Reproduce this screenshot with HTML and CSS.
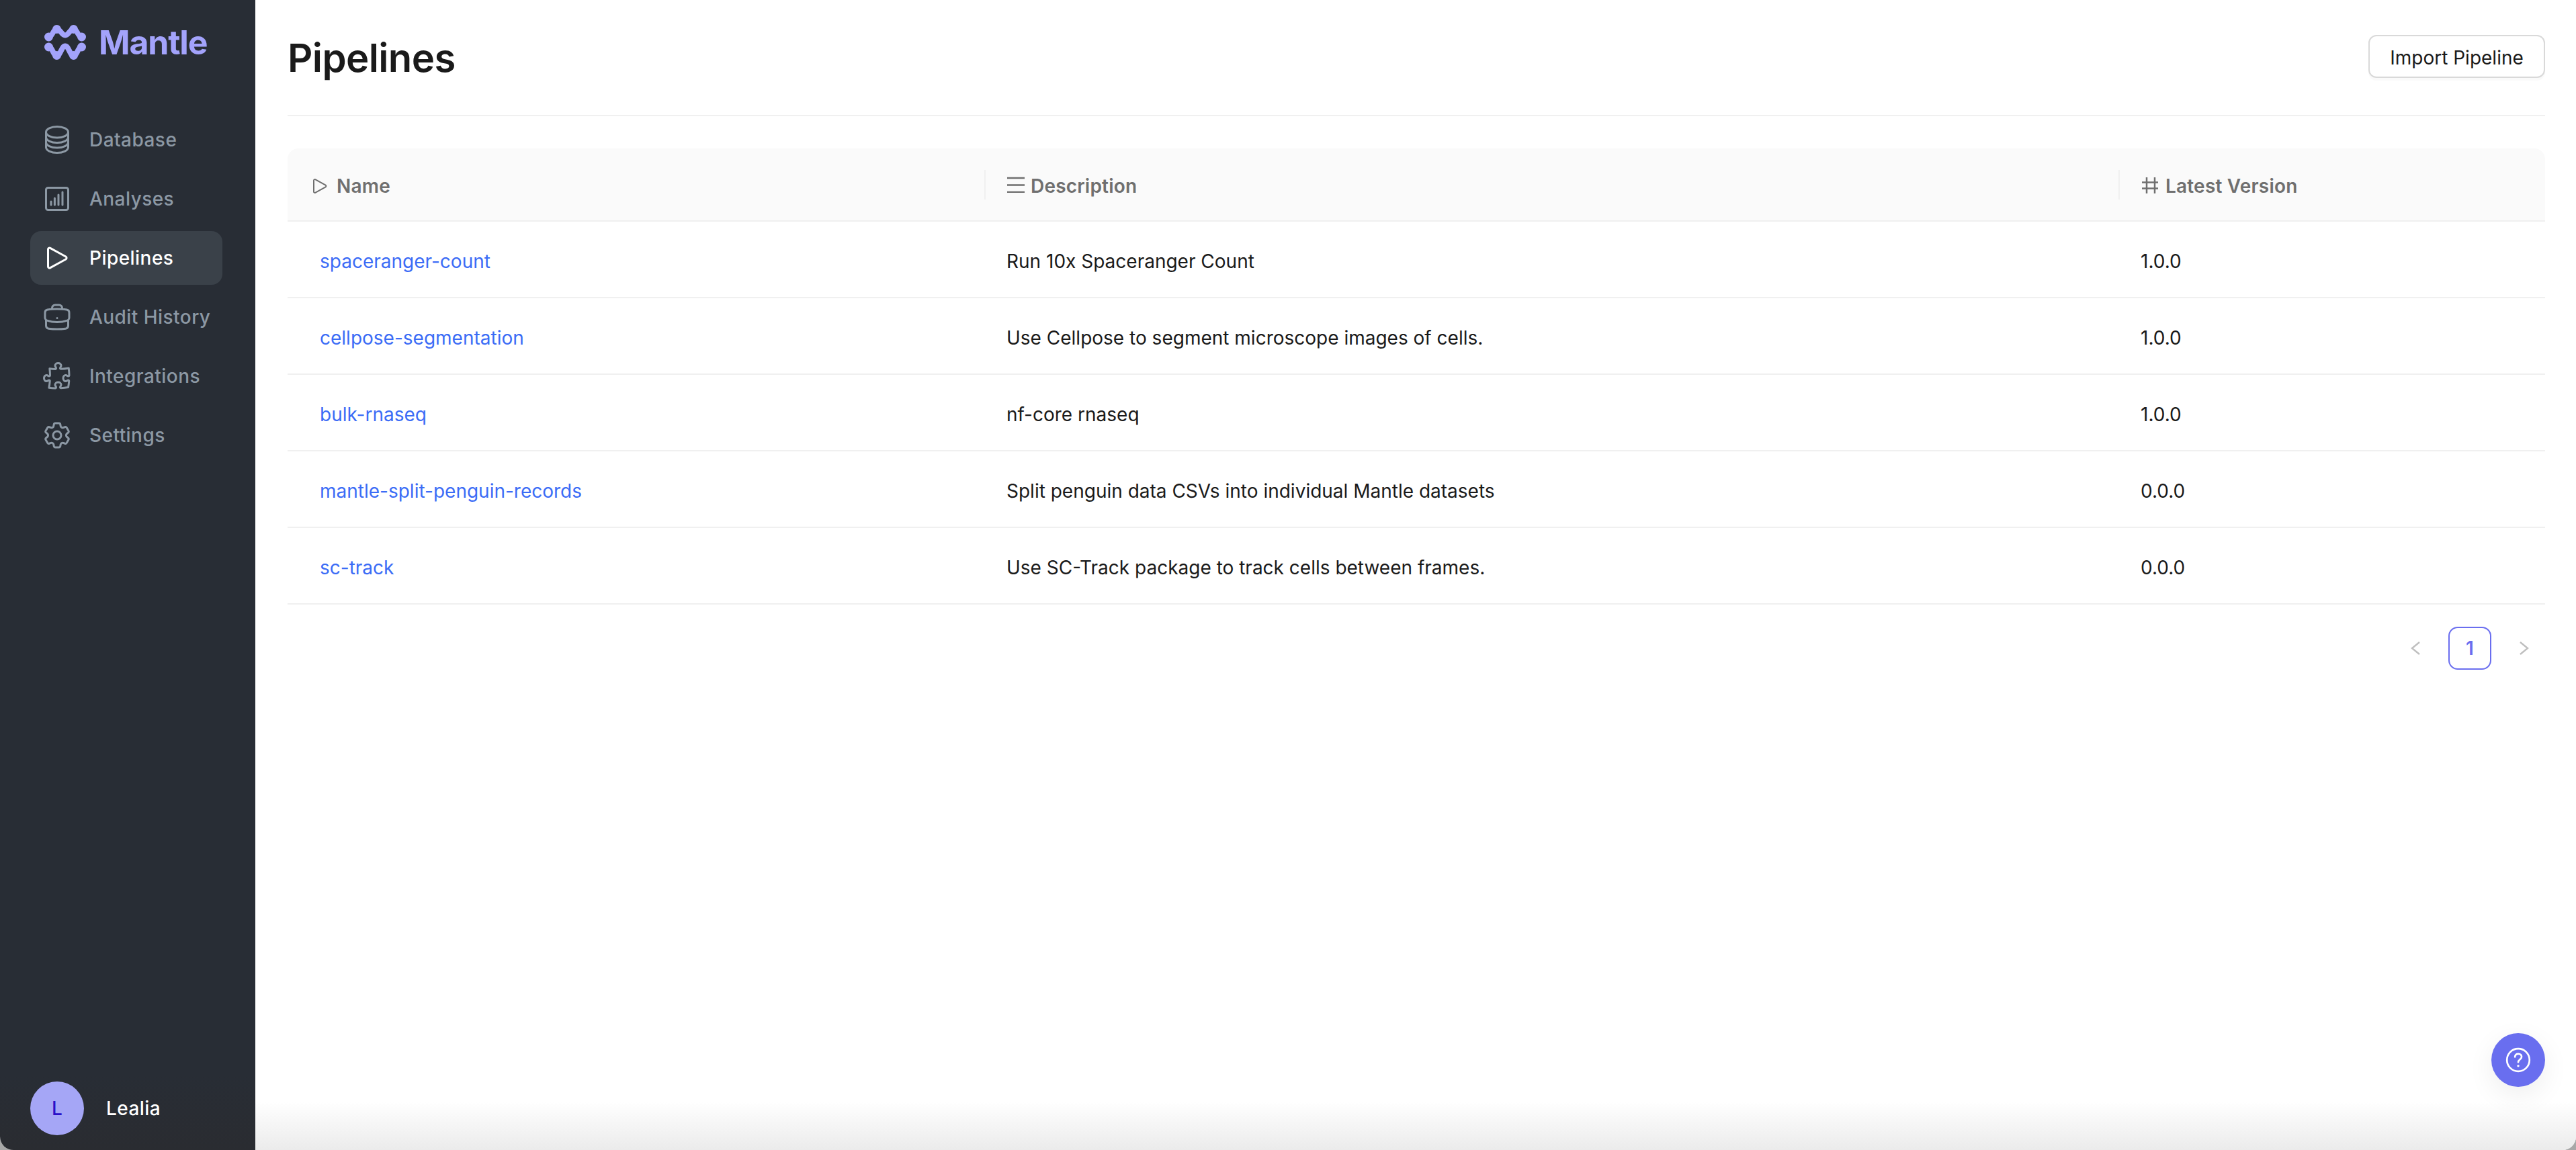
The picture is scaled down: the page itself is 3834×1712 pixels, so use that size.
FILE: index.html
```html
<!DOCTYPE html>
<html lang="en">
<head>
<meta charset="utf-8">
<title>Pipelines - Mantle</title>
<link rel="stylesheet" href="styles.css">
</head>
<body>
<div class="app">
  <aside class="sidebar">
    <div class="brand">
      <svg class="brand-mark" viewBox="0 0 62 52" width="62" height="52" fill="none">
        <g class="wave">
          <path d="M6.5 18C12.5 18 12.5 6.5 18.5 6.5S25.5 15.5 31 15.5 37.5 6.5 43.5 6.5 49.5 18 55.5 18"/>
          <path d="M6.5 33C12.5 33 12.5 45.5 18.5 45.5S25.5 31.5 31 31.5 37.5 45.5 43.5 45.5 49.5 33 55.5 33"/>
        </g>
        <g class="wave-dots">
          <circle cx="6.5" cy="18" r="6.5"/><circle cx="18.5" cy="6.5" r="6.5"/><circle cx="43.5" cy="6.5" r="6.5"/><circle cx="55.5" cy="18" r="6.5"/>
          <circle cx="6.5" cy="33" r="6.5"/><circle cx="18.5" cy="45.5" r="6.5"/><circle cx="43.5" cy="45.5" r="6.5"/><circle cx="55.5" cy="33" r="6.5"/>
        </g>
      </svg>
      <span class="brand-name">Mantle</span>
    </div>
    <nav class="nav">
      <a class="nav-item">
        <svg class="nav-icon" viewBox="0 0 24 24"><path d="M20.25 6.375c0 2.278-3.694 4.125-8.25 4.125S3.75 8.653 3.75 6.375m16.5 0c0-2.278-3.694-4.125-8.25-4.125S3.75 4.097 3.75 6.375m16.5 0v11.25c0 2.278-3.694 4.125-8.25 4.125s-8.25-1.847-8.25-4.125V6.375m16.5 0v3.75m-16.5-3.75v3.75m16.5 0v3.75C20.25 16.153 16.556 18 12 18s-8.25-1.847-8.25-4.125v-3.75m16.5 0c0 2.278-3.694 4.125-8.25 4.125s-8.25-1.847-8.25-4.125"/></svg>
        <span>Database</span>
      </a>
      <a class="nav-item">
        <svg class="nav-icon" viewBox="0 0 24 24"><rect x="3.75" y="3.75" width="16.5" height="16.5" rx="1.5"/><path d="M7.5 16.5V14M10.2 16.5V11.5M13 16.5V9M16 16.5V7"/></svg>
        <span>Analyses</span>
      </a>
      <a class="nav-item active">
        <svg class="nav-icon" viewBox="0 0 24 24"><path stroke-linejoin="round" d="M5.25 5.653c0-.856.917-1.398 1.667-.986l11.54 6.348a1.125 1.125 0 010 1.971l-11.54 6.347a1.125 1.125 0 01-1.667-.985V5.653z"/></svg>
        <span>Pipelines</span>
      </a>
      <a class="nav-item">
        <svg class="nav-icon" viewBox="0 0 24 24"><path d="M20.25 14.15v4.25c0 1.094-.787 2.036-1.872 2.18-2.087.277-4.216.42-6.378.42s-4.291-.143-6.378-.42c-1.085-.144-1.872-1.086-1.872-2.18v-4.25m16.5 0a2.18 2.18 0 00.75-1.661V8.706c0-1.081-.768-2.015-1.837-2.175a48.114 48.114 0 00-3.413-.387m4.5 8.006c-.194.165-.42.295-.673.38A23.978 23.978 0 0112 15.75c-2.648 0-5.195-.429-7.577-1.22a2.016 2.016 0 01-.673-.38m0 0A2.18 2.18 0 013 12.489V8.706c0-1.081.768-2.015 1.837-2.175a48.111 48.111 0 013.413-.387m7.5 0V5.25A2.25 2.25 0 0013.5 3h-3a2.25 2.25 0 00-2.25 2.25v.894m7.5 0a48.667 48.667 0 00-7.5 0M12 12.75h.008v.008H12v-.008z"/></svg>
        <span>Audit History</span>
      </a>
      <a class="nav-item">
        <svg class="nav-icon" viewBox="0 0 24 24"><path d="M14.25 6.087c0-.355.186-.676.401-.959.221-.29.349-.634.349-1.003 0-1.036-1.007-1.875-2.25-1.875s-2.25.84-2.25 1.875c0 .369.128.713.349 1.003.215.283.401.604.401.959v0a.64.64 0 01-.657.643 48.39 48.39 0 01-4.163-.3c.186 1.613.293 3.25.315 4.907a.656.656 0 01-.658.663v0c-.355 0-.676-.186-.959-.401a1.647 1.647 0 00-1.003-.349c-1.036 0-1.875 1.007-1.875 2.25s.84 2.25 1.875 2.25c.369 0 .713-.128 1.003-.349.283-.215.604-.401.959-.401v0c.31 0 .555.26.532.57a48.039 48.039 0 01-.642 5.056c1.518.19 3.058.309 4.616.354a.64.64 0 00.657-.643v0c0-.355-.186-.676-.401-.959a1.647 1.647 0 01-.349-1.003c0-1.035 1.008-1.875 2.25-1.875 1.243 0 2.25.84 2.25 1.875 0 .369-.128.713-.349 1.003-.215.283-.4.604-.4.959v0c0 .333.277.599.61.58a48.1 48.1 0 005.427-.63 48.05 48.05 0 00.582-4.717.532.532 0 00-.533-.57v0c-.355 0-.676.186-.959.401-.29.221-.634.349-1.003.349-1.035 0-1.875-1.007-1.875-2.25s.84-2.25 1.875-2.25c.37 0 .713.128 1.003.349.283.215.604.401.96.401v0a.656.656 0 00.658-.663 48.422 48.422 0 00-.37-5.36c-1.886.342-3.81.574-5.766.689a.578.578 0 01-.61-.58v0z"/></svg>
        <span>Integrations</span>
      </a>
      <a class="nav-item">
        <svg class="nav-icon" viewBox="0 0 24 24"><path d="M9.594 3.94c.09-.542.56-.94 1.11-.94h2.593c.55 0 1.02.398 1.11.94l.213 1.281c.063.374.313.686.645.87.074.04.147.083.22.127.324.196.72.257 1.075.124l1.217-.456a1.125 1.125 0 011.37.49l1.296 2.247a1.125 1.125 0 01-.26 1.431l-1.003.827c-.293.24-.438.613-.431.992a6.759 6.759 0 010 .255c-.007.378.138.75.43.99l1.005.828c.424.35.534.954.26 1.43l-1.298 2.247a1.125 1.125 0 01-1.369.491l-1.217-.456c-.355-.133-.75-.072-1.076.124a6.57 6.57 0 01-.22.128c-.331.183-.581.495-.644.869l-.213 1.28c-.09.543-.56.941-1.11.941h-2.594c-.55 0-1.02-.398-1.11-.94l-.213-1.281c-.062-.374-.312-.686-.644-.87a6.52 6.52 0 01-.22-.127c-.325-.196-.72-.257-1.076-.124l-1.217.456a1.125 1.125 0 01-1.369-.49l-1.297-2.247a1.125 1.125 0 01.26-1.431l1.004-.827c.292-.24.437-.613.43-.992a6.932 6.932 0 010-.255c.007-.378-.138-.75-.43-.99l-1.004-.828a1.125 1.125 0 01-.26-1.43l1.297-2.247a1.125 1.125 0 011.37-.491l1.216.456c.356.133.751.072 1.076-.124.072-.044.146-.087.22-.128.332-.183.582-.495.644-.869l.214-1.281z"/><path d="M15 12a3 3 0 11-6 0 3 3 0 016 0z"/></svg>
        <span>Settings</span>
      </a>
    </nav>
    <div class="user">
      <div class="avatar">L</div>
      <span class="user-name">Lealia</span>
    </div>
  </aside>

  <main class="main">
    <header class="page-header">
      <h1 class="page-title">Pipelines</h1>
      <button class="btn">Import Pipeline</button>
    </header>

    <table class="table">
      <thead>
        <tr>
          <th class="col-name"><span class="th-inner th-inner-name">
            <svg class="th-icon th-play" viewBox="0 0 24 24"><path stroke-linejoin="round" d="M5.25 5.653c0-.856.917-1.398 1.667-.986l11.54 6.348a1.125 1.125 0 010 1.971l-11.54 6.347a1.125 1.125 0 01-1.667-.985V5.653z"/></svg>Name</span></th>
          <th class="col-desc"><span class="th-inner th-divided th-inner-desc">
            <svg class="th-icon th-bars" viewBox="0 0 26 24"><path d="M0 2h26M0 12.5h26M0 23h26"/></svg>Description</span></th>
          <th class="col-ver"><span class="th-inner th-divided th-inner-ver">
            <svg class="th-icon th-hash" viewBox="0 0 24 24"><path d="M7 0v24M19 0v24M0 7.5h24M0 16.5h24"/></svg>Latest Version</span></th>
        </tr>
      </thead>
      <tbody>
        <tr><td class="cell-name"><a class="link">spaceranger-count</a></td><td>Run 10x Spaceranger Count</td><td>1.0.0</td></tr>
        <tr><td class="cell-name"><a class="link">cellpose-segmentation</a></td><td>Use Cellpose to segment microscope images of cells.</td><td>1.0.0</td></tr>
        <tr><td class="cell-name"><a class="link">bulk-rnaseq</a></td><td>nf-core rnaseq</td><td>1.0.0</td></tr>
        <tr><td class="cell-name"><a class="link">mantle-split-penguin-records</a></td><td>Split penguin data CSVs into individual Mantle datasets</td><td>0.0.0</td></tr>
        <tr><td class="cell-name"><a class="link">sc-track</a></td><td>Use SC-Track package to track cells between frames.</td><td>0.0.0</td></tr>
      </tbody>
    </table>

    <div class="pagination">
      <svg class="chev" viewBox="0 0 14 20"><path d="M13 1L2 10l11 9"/></svg>
      <span class="page-num">1</span>
      <svg class="chev" viewBox="0 0 14 20"><path d="M1 1l11 9-11 9"/></svg>
    </div>

    <button class="help" aria-label="Help">
      <svg class="help-icon" viewBox="0 0 24 24"><circle cx="12" cy="12" r="10.6"/><path d="M8.9 9.1c.2-1.8 1.5-2.9 3.2-2.9 1.8 0 3.1 1.2 3.1 2.8 0 2.5-3.2 2.6-3.2 5"/><circle class="help-dot" cx="12" cy="17.6" r="1.1"/></svg>
    </button>
  </main>
</div>
</body>
</html>
```

FILE: styles.css
```css
* { box-sizing: border-box; }
html, body { margin: 0; height: 100%; }
body {
  background: #a8a8a8;
  font-family: Inter, "Liberation Sans", sans-serif;
  font-size: 28px;
  color: #1a1a1a;
  overflow: hidden;
}
.app {
  display: flex;
  height: 1712px;
  border-radius: 0 0 20px 20px;
  overflow: hidden;
  background: #fff;
}

/* Sidebar */
.sidebar {
  flex: 0 0 380px;
  display: flex;
  flex-direction: column;
  background: linear-gradient(#282d35 1600px, #2a2c31 100%);
}
.brand {
  display: flex;
  align-items: center;
  gap: 19px;
  height: 52px;
  margin: 37px 0 0 66px;
}
.brand-mark { flex: none; }
.wave { stroke: #a3a3fb; stroke-width: 8; stroke-linecap: round; fill: none; }
.wave-dots { fill: #a3a3fb; }
.brand-name {
  font-size: 50px;
  font-weight: 700;
  color: #a3a3fb;
  letter-spacing: -1.2px;
  line-height: 52px;
}
.nav {
  display: flex;
  flex-direction: column;
  gap: 8px;
  margin: 79px 49px 0 45px;
}
.nav-item {
  display: flex;
  align-items: center;
  gap: 24px;
  height: 80px;
  padding-left: 16px;
  border-radius: 16px;
  color: #8c98a4;
  font-weight: 500;
  letter-spacing: 0.45px;
}
.nav-item.active { background: #3a4149; color: #fff; }
.nav-icon {
  flex: none;
  width: 48px;
  height: 48px;
  fill: none;
  stroke: currentColor;
  stroke-width: 1.5;
  stroke-linecap: round;
  stroke-linejoin: round;
}
.user {
  display: flex;
  align-items: center;
  gap: 33px;
  margin: auto 0 22px 45px;
}
.avatar {
  width: 80px;
  height: 80px;
  border-radius: 50%;
  background: #a5a6f6;
  color: #2a10c8;
  font-weight: 500;
  display: flex;
  align-items: center;
  justify-content: center;
}
.user-name { color: #fff; font-weight: 500; letter-spacing: 0.45px; }

/* Main */
.main {
  position: relative;
  flex: 1;
  min-width: 0;
  padding: 0 46px 0 48px;
  background: linear-gradient(#fff 1640px, #ebebeb 100%);
}
.page-header {
  display: flex;
  align-items: center;
  justify-content: space-between;
  height: 173px;
  padding-bottom: 3px;
  border-bottom: 2px solid #f0f0f0;
}
.page-title {
  margin: 0;
  padding-top: 3px;
  font-size: 58px;
  font-weight: 600;
  letter-spacing: -0.6px;
  color: #1a1a1a;
}
.btn {
  width: 263px;
  height: 64px;
  padding: 4px 0 0;
  font: inherit;
  color: #1a1a1a;
  background: #fff;
  border: 2px solid #d9d9d9;
  border-radius: 12px;
  box-shadow: 0 4px 0 rgba(0, 0, 0, .02);
}

/* Table */
.table {
  width: 3360px;
  margin-top: 48px;
  border-collapse: separate;
  border-spacing: 0;
  table-layout: fixed;
}
.col-name { width: 1038px; }
.col-desc { width: 1688px; }
.col-ver { width: 634px; }
.table th {
  height: 109px;
  padding: 0;
  background: #fafafa;
  border-bottom: 2px solid #f0f0f0;
  color: #6f6f6f;
  font-weight: 600;
  letter-spacing: 0.2px;
  text-align: left;
}
.table th:first-child { border-top-left-radius: 16px; }
.table th:last-child { border-top-right-radius: 16px; }
.th-inner {
  display: flex;
  align-items: center;
  height: 44px;
  padding: 4px 0 0 32px;
  gap: 10px;
}
.th-inner-name { gap: 9px; }
.th-inner-desc { padding-left: 33px; gap: 9px; }
.th-inner-ver { padding-left: 34px; gap: 11px; }
.th-divided { position: relative; }
.th-divided::before {
  content: "";
  position: absolute;
  left: -1px;
  top: 0;
  bottom: 0;
  width: 2px;
  background: #f0f0f0;
}
.th-icon {
  flex: none;
  fill: none;
  stroke: currentColor;
  stroke-linecap: round;
}
.th-play { width: 32px; height: 32px; stroke-width: 1.5; }
.th-bars { width: 26px; height: 24px; stroke-width: 2.5; stroke-linecap: butt; margin-bottom: 3px; }
.th-hash { width: 24px; height: 24px; stroke-width: 2.5; stroke-linecap: butt; margin-bottom: 2px; }
.table td {
  height: 114px;
  padding: 5px 0 0 32px;
  border-bottom: 2px solid #f0f0f0;
  color: #1a1a1a;
  font-weight: 400;
}
.table td.cell-name { padding-left: 48px; }
.link { color: #3b6cf6; }

/* Pagination */
.pagination {
  display: flex;
  justify-content: flex-end;
  align-items: center;
  gap: 42px;
  margin-top: 33px;
  padding-right: 24px;
}
.chev {
  width: 14px;
  height: 20px;
  fill: none;
  stroke: #bfbfbf;
  stroke-width: 2.4;
}
.page-num {
  width: 64px;
  height: 64px;
  display: flex;
  align-items: center;
  justify-content: center;
  border: 2px solid #6a6eef;
  border-radius: 14px;
  color: #6a6eef;
  font-weight: 600;
}

/* Help */
.help {
  position: absolute;
  right: 46px;
  bottom: 94px;
  width: 80px;
  height: 80px;
  padding: 0;
  border: 0;
  border-radius: 50%;
  background: #696eef;
  box-shadow: 0 12px 40px rgba(0, 0, 0, .07);
  display: flex;
  align-items: center;
  justify-content: center;
}
.help-icon {
  width: 38px;
  height: 38px;
  fill: none;
  stroke: #fff;
  stroke-width: 1.7;
  stroke-linecap: round;
}
.help-dot { fill: #fff; stroke: none; }
```
